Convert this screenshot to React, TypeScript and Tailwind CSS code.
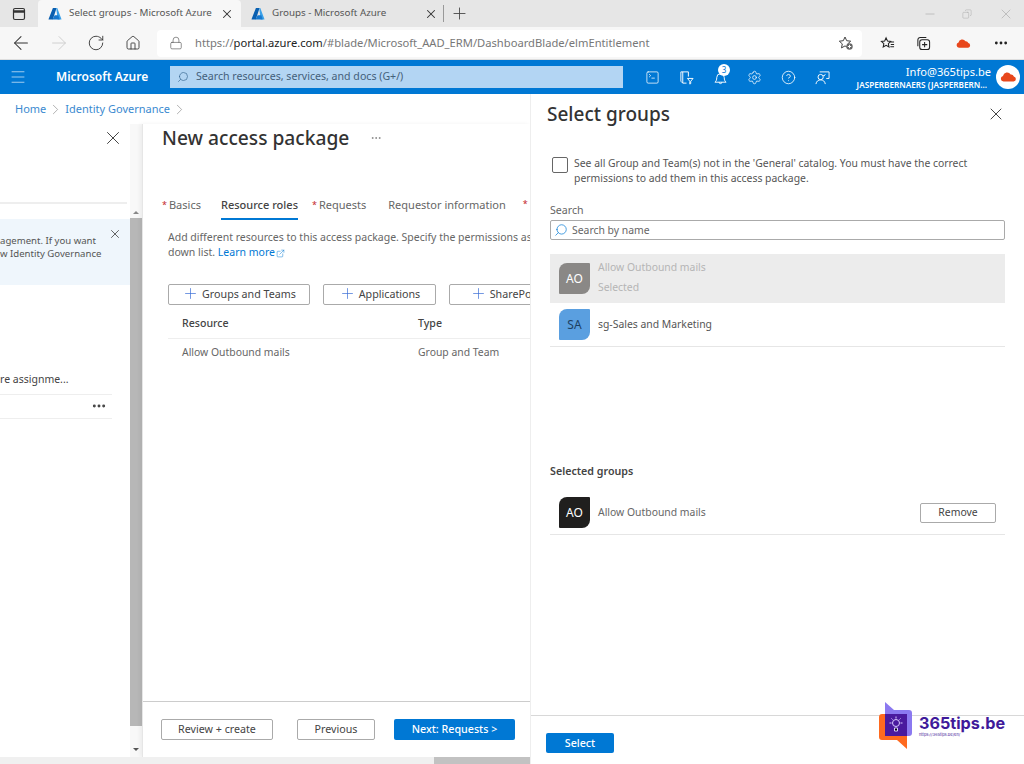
import {
  ArrowLeft,
  ArrowRight,
  ChevronRight,
  CircleHelp,
  Copy,
  Ellipsis,
  ExternalLink,
  Home,
  Lock,
  Menu,
  Minus,
  Plus,
  RotateCw,
  Search,
  Settings,
  SquareTerminal,
  X,
} from "lucide-react"

function AzureLogo() {
  return (
    <svg viewBox="0 0 16 16" className="w-[14px] h-[14px] shrink-0">
      <path d="M5.6 1.2h4.2L5.5 14.4H1.2a.5.5 0 0 1-.5-.7z" fill="#0a5fb0" />
      <path d="M9.4 1.2h1.2l4.7 12.5a.5.5 0 0 1-.5.7H11z" fill="#3aa0e8" />
      <path d="M7.6 9.5h4.2l1.6 4.9H5z" fill="#1678cf" />
    </svg>
  )
}

function TinyCloud({ className }: { className: string }) {
  return (
    <svg viewBox="0 0 20 12" className={className}>
      <path d="M4 11.5a3.4 3.4 0 0 1-.6-6.7A5 5 0 0 1 12.6 3a3.6 3.6 0 0 1 3.8 2.4 3.1 3.1 0 0 1-.2 6.1z" fill="#e8471c" />
    </svg>
  )
}

function BrowserChrome() {
  return (
    <>
      <div className="h-[27px] bg-[#e6e6e6] flex items-stretch shrink-0">
        <div className="w-[38px] flex items-center justify-center">
          <svg viewBox="0 0 14 14" className="w-[14px] h-[14px]" fill="none" stroke="#333" strokeWidth="1.2">
            <rect x="1.5" y="1.5" width="11" height="11" rx="1.5" />
            <path d="M1.5 4.5h11" strokeWidth="2.5" />
          </svg>
        </div>
        <div className="w-[203px] bg-[#f7f7f7] flex items-center pl-[10px] pr-[7px] text-[9.8px] text-[#555] rounded-t-[4px]">
          <AzureLogo />
          <span className="ml-[7px] whitespace-nowrap">Select groups - Microsoft Azure</span>
          <X className="ml-auto w-[14px] h-[14px] text-[#333]" strokeWidth={1.8} />
        </div>
        <div className="w-[202px] flex items-center pl-[10px] pr-[5px] text-[9.8px] text-[#555]">
          <AzureLogo />
          <span className="ml-[7px] whitespace-nowrap">Groups - Microsoft Azure</span>
          <X className="ml-auto w-[14px] h-[14px] text-[#333]" strokeWidth={1.8} />
        </div>
        <div className="w-px h-[17px] my-[5px] bg-[#999]" />
        <div className="ml-[6px] flex items-center">
          <Plus className="w-[19px] h-[19px] text-[#444]" strokeWidth={1.1} />
        </div>
        <div className="ml-auto flex items-center text-[#aaa]">
          <Minus className="w-[14px] h-[14px] mr-[25px]" strokeWidth={1.1} />
          <Copy className="w-[10px] h-[10px] mr-[26px] -scale-x-100" strokeWidth={1.2} />
          <X className="w-[16px] h-[16px] mr-[10px]" strokeWidth={1} />
        </div>
      </div>
      <div className="h-[33px] bg-[#f7f7f7] flex items-center shrink-0 border-b border-[#dedede]">
        <ArrowLeft className="ml-[10px] w-[22px] h-[22px] text-[#333]" strokeWidth={1.1} />
        <ArrowRight className="ml-[16px] w-[22px] h-[22px] text-[#ccc]" strokeWidth={1} />
        <RotateCw className="ml-[17px] w-[18px] h-[18px] text-[#333]" strokeWidth={1.2} />
        <Home className="ml-[20px] w-[16px] h-[16px] text-[#333]" strokeWidth={1.3} />
        <div className="ml-[16px] w-[705px] h-[27px] bg-white rounded-[4px] flex items-center pl-[12px] text-[11.2px] text-[#777]">
          <Lock className="w-[14px] h-[14px] text-[#555]" strokeWidth={1.1} />
          <span className="ml-[12px] whitespace-nowrap">
            https://<span className="text-[#222]">portal.azure.com</span>/#blade/Microsoft_AAD_ERM/DashboardBlade/elmEntitlement
          </span>
          <svg viewBox="0 0 16 16" className="ml-auto mr-[8px] w-[16px] h-[16px]" fill="none" stroke="#444" strokeWidth="1">
            <path d="M7 2l1.7 3.7 4 .5-3 2.7.8 4-3.5-2-3.5 2 .8-4-3-2.7 4-.5z" />
            <circle cx="11.5" cy="11.5" r="3.2" fill="#666" stroke="none" />
            <path d="M11.5 9.8v3.4M9.8 11.5h3.4" stroke="#fff" />
          </svg>
        </div>
        <svg viewBox="0 0 16 16" className="ml-[18px] w-[15px] h-[15px]" fill="none" stroke="#222" strokeWidth="1.1">
          <path d="M6.5 2l1.5 3.4 3.5.4-2.6 2.4.7 3.6-3.1-1.8-3.1 1.8.7-3.6L1.5 5.8 5 5.4z" />
          <path d="M11 6.5h4M11.5 9h3.5M11 11.5h4" />
        </svg>
        <svg viewBox="0 0 16 16" className="ml-[21px] w-[15px] h-[15px]" fill="none" stroke="#222" strokeWidth="1.1">
          <rect x="4" y="4" width="10.5" height="10.5" rx="2.5" />
          <path d="M2 11V4a2.5 2.5 0 0 1 2.5-2.5H11M9.2 6.5v5.5M6.5 9.2H12" />
        </svg>
        <TinyCloud className="ml-[25px] w-[15px] h-[9px]" />
        <Ellipsis className="ml-[22px] w-[16px] h-[16px] text-[#222]" strokeWidth={2.2} />
      </div>
    </>
  )
}

function PortalBar() {
  return (
    <div className="h-[34px] bg-[#0078d4] flex items-center shrink-0 text-white">
      <Menu className="ml-[9px] w-[18px] h-[18px] text-[#d5e8f7]" strokeWidth={1} />
      <span className="ml-[29px] w-[114px] text-[12px] font-semibold whitespace-nowrap">Microsoft Azure</span>
      <div className="w-[453px] h-[22px] bg-[#b3d5f3] flex items-center pl-[7px] text-[10.6px] text-[#44607a]">
        <Search className="w-[12px] h-[12px] -scale-x-100 text-[#3b6a94]" strokeWidth={1.4} />
        <span className="ml-[7px] whitespace-nowrap">Search resources, services, and docs (G+/)</span>
      </div>
      <SquareTerminal className="ml-[22px] w-[15px] h-[15px]" strokeWidth={1.2} />
      <svg viewBox="0 0 16 16" className="ml-[19px] w-[15px] h-[15px]" fill="none" stroke="#fff" strokeWidth="1">
        <path d="M2 2h8v5M2 2v10l2 2h4M4 2v12M9 9h6l-2.5 3v2.5l-1 .5v-3z" />
      </svg>
      <div className="ml-[19px] relative w-[15px] h-[15px]">
        <svg viewBox="0 0 16 16" className="w-[15px] h-[15px]" fill="none" stroke="#fff" strokeWidth="1">
          <path d="M2 13c1.5-1 2-2.5 2-5a4 4 0 0 1 8 0c0 2.5.5 4 2 5zM6.5 13a1.5 1.5 0 0 0 3 0" />
        </svg>
        <span className="absolute -top-[6px] left-[5px] w-[12px] h-[12px] rounded-full bg-white text-[#0078d4] text-[8px] leading-[12px] text-center">
          3
        </span>
      </div>
      <Settings className="ml-[19px] w-[15px] h-[15px]" strokeWidth={1.2} />
      <CircleHelp className="ml-[19px] w-[15px] h-[15px]" strokeWidth={1.3} />
      <svg viewBox="0 0 16 16" className="ml-[19px] w-[15px] h-[15px]" fill="none" stroke="#fff" strokeWidth="1">
        <circle cx="6" cy="7.5" r="2.8" />
        <path d="M1 15c.5-3 2.5-4.5 5-4.5s4.5 1.5 5 4.5M5 2h10v7h-3M11 4.5l-1.5 2-1-1" />
      </svg>
      <div className="ml-auto flex flex-col items-end mr-[5px]">
        <span className="text-[11.1px] leading-[15px] whitespace-nowrap">Info@365tips.be</span>
        <span className="text-[8.2px] leading-[11px] mr-[4px] font-semibold whitespace-nowrap">JASPERBERNAERS (JASPERBERN...</span>
      </div>
      <div className="w-[24px] h-[24px] rounded-full bg-white flex items-center justify-center mr-[4px]">
        <TinyCloud className="w-[17px] h-[10px]" />
      </div>
    </div>
  )
}

function LeftBlade() {
  return (
    <div className="w-[130px] shrink-0 flex flex-col overflow-hidden">
      <div className="h-[28px] flex items-center justify-end pr-[6px]">
        <X className="w-[22px] h-[22px] text-[#333]" strokeWidth={1} />
      </div>
      <div className="mt-[50px] mr-[3px] border-t-2 border-[#eee]" />
      <div className="mt-[15px] h-[66px] bg-[#eff6fc] flex justify-between pr-[8px] pt-[8px] text-[9.6px] leading-[12.5px] text-[#555]">
        <div className="whitespace-nowrap pt-[8px]">
          <div>agement. If you want</div>
          <div>w Identity Governance</div>
        </div>
        <X className="w-[14px] h-[14px] text-[#444]" strokeWidth={1.4} />
      </div>
      <div className="mt-[87px] text-[10.5px] text-[#444] whitespace-nowrap">re assignme...</div>
      <div className="mt-[6px] mr-[18px] border-t border-[#eee] h-[25px] border-b flex items-center justify-end pr-[5px]">
        <Ellipsis className="w-[16px] h-[16px] text-[#444]" strokeWidth={2.4} />
      </div>
    </div>
  )
}

function FakeScrollbar() {
  return (
    <div className="w-[12px] shrink-0 flex flex-col items-center bg-[#f8f8f8]">
      <div className="mt-[82px] h-[12px] flex items-center">
        <div className="w-0 h-0 border-x-[3px] border-x-transparent border-b-[3px] border-b-[#888]" />
      </div>
      <div className="w-full h-[508px] bg-[#b7b7b7]" />
      <div className="mt-[17px] h-[12px] flex items-center">
        <div className="w-0 h-0 border-x-[3px] border-x-transparent border-t-[3px] border-t-[#555]" />
      </div>
    </div>
  )
}

function Tab({ label, required, active }: { label: string; required?: boolean; active?: boolean }) {
  return (
    <div
      className={`h-[28px] flex items-center whitespace-nowrap border-b-2 text-[11px] ${
        active ? "border-[#0078d4] text-[#444] font-medium" : "border-transparent text-[#666]"
      }`}
    >
      {required && <span className="text-[#c4262e] text-[9px] mr-[2px]">*</span>}
      {label}
    </div>
  )
}

function AddButton({ label, className }: { label: string; className: string }) {
  return (
    <div className={`h-[21px] border border-[#aaa] rounded-[2px] flex items-center justify-center gap-[3px] text-[10.7px] text-[#444] whitespace-nowrap shrink-0 ${className}`}>
      <Plus className="w-[17px] h-[17px] text-[#3b6fd6] -mt-[2px]" strokeWidth={1} />
      {label}
    </div>
  )
}

function MainBlade() {
  return (
    <div className="flex-1 min-w-0 flex flex-col overflow-hidden border-l border-[#e6e6e6] shadow-[-2px_0_4px_rgba(0,0,0,0.05)]">
      <div className="flex items-center pl-[19px] h-[28px]">
        <h1 className="text-[19.2px] font-medium text-[#333] whitespace-nowrap">New access package</h1>
        <Ellipsis className="ml-[21px] w-[12px] h-[12px] text-[#777]" strokeWidth={1.5} />
      </div>
      <div className="mt-[40px] ml-[19px] flex">
        <Tab label="Basics" required />
        <div className="ml-[20px]"><Tab label="Resource roles" active /></div>
        <div className="ml-[14px]"><Tab label="Requests" required /></div>
        <div className="ml-[22px]"><Tab label="Requestor information" /></div>
        <div className="ml-[17px] text-[#c4262e] text-[9px] pt-[5px]">*</div>
      </div>
      <div className="mt-[10px] ml-[25px] text-[10.5px] leading-[15px] text-[#666] whitespace-nowrap">
        <div>Add different resources to this access package. Specify the permissions assigned to users in the</div>
        <div>
          down list. <span className="text-[#0078d4]">Learn more</span>
          <ExternalLink className="inline ml-[1px] w-[9px] h-[9px] text-[#0078d4]" strokeWidth={1.3} />
        </div>
      </div>
      <div className="mt-[24px] ml-[25px] flex gap-[13px]">
        <AddButton label="Groups and Teams" className="w-[142px]" />
        <AddButton label="Applications" className="w-[113px]" />
        <AddButton label="SharePoint sites" className="w-[142px]" />
      </div>
      <div className="mt-[7px] ml-[25px] h-[27px] pb-[2px] flex items-center border-b border-[#eee] text-[10.6px] font-medium text-[#444] pl-[14px]">
        <div className="w-[236px]">Resource</div>
        <div>Type</div>
      </div>
      <div className="ml-[25px] h-[26px] pt-[2px] flex items-center text-[10.4px] text-[#666] pl-[14px] whitespace-nowrap">
        <div className="w-[236px]">Allow Outbound mails</div>
        <div>Group and Team</div>
      </div>
      <div className="mt-auto h-[56px] border-t border-[#ccc] flex items-start pt-[17px] pl-[18px] text-[10.7px]">
        <div className="w-[112px] h-[21px] border border-[#aaa] rounded-[2px] flex items-center justify-center text-[#444]">Review + create</div>
        <div className="ml-[24px] w-[78px] h-[21px] border border-[#aaa] rounded-[2px] flex items-center justify-center text-[#444]">Previous</div>
        <div className="ml-[19px] w-[121px] h-[21px] bg-[#0078d4] rounded-[2px] flex items-center justify-center text-white font-medium">Next: Requests &gt;</div>
      </div>
    </div>
  )
}

function GroupAvatar({ initials, className }: { initials: string; className: string }) {
  return (
    <div className={`w-[31px] h-[31px] shrink-0 rounded-tl-[8px] rounded-br-[8px] rounded-tr-[1px] rounded-bl-[1px] flex items-center justify-center text-[12px] ${className}`}>
      {initials}
    </div>
  )
}

function SelectPanel() {
  return (
    <div className="w-[494px] shrink-0 border-l border-[#eee] bg-white flex flex-col">
      <div className="flex items-center justify-between pl-[16px] pr-[18px] mt-[6px] h-[28px]">
        <h2 className="text-[19px] font-medium text-[#333]">Select groups</h2>
        <X className="w-[20px] h-[20px] text-[#333]" strokeWidth={1.1} />
      </div>
      <div className="mt-[28px] ml-[21px] flex">
        <div className="w-[16px] h-[16px] mt-[1px] border border-[#666] rounded-[2px] shrink-0" />
        <p className="ml-[6px] text-[10.4px] leading-[15px] text-[#555] w-[420px]">
          See all Group and Team(s) not in the 'General' catalog. You must have the correct permissions to add them in this access package.
        </p>
      </div>
      <div className="mt-[17px] ml-[19px] text-[10.6px] leading-[14px] text-[#666]">Search</div>
      <div className="mt-[3px] ml-[19px] w-[455px] h-[20px] border border-[#aaa] rounded-[2px] flex items-center pl-[3px] text-[10.4px] leading-[14px] text-[#666]">
        <Search className="w-[14px] h-[14px] -scale-x-100 text-[#0078d4]" strokeWidth={1.2} />
        <span className="ml-[4px]">Search by name</span>
      </div>
      <div className="mt-[14px] ml-[19px] w-[455px]">
        <div className="h-[49px] bg-[#ececec] flex items-center pl-[9px] text-[10.4px] leading-[20px] text-[#b5b5b5]">
          <GroupAvatar initials="AO" className="bg-[#8a8886] text-white" />
          <div className="ml-[8px] -mt-[3px]">
            <div>Allow Outbound mails</div>
            <div>Selected</div>
          </div>
        </div>
        <div className="h-[44px] border-b border-[#e6e6e6] flex items-center pl-[9px] text-[10.4px] text-[#555]">
          <GroupAvatar initials="SA" className="bg-[#5a9fe0] text-[#1c3f63]" />
          <span className="ml-[8px]">sg-Sales and Marketing</span>
        </div>
      </div>
      <div className="mt-[117px] ml-[19px] text-[10.7px] leading-[14px] font-semibold text-[#444]">Selected groups</div>
      <div className="mt-[18px] ml-[19px] w-[455px] h-[39px] pb-[5px] border-b border-[#e6e6e6] flex items-center pl-[9px] text-[10.4px] text-[#666]">
        <GroupAvatar initials="AO" className="bg-[#201f1e] text-white" />
        <span className="ml-[8px]">Allow Outbound mails</span>
        <div className="ml-auto mr-[9px] w-[76px] h-[20px] border border-[#aaa] rounded-[2px] flex items-center justify-center text-[#444]">Remove</div>
      </div>
      <div className="mt-auto h-[49px] border-t border-[#d8d8d8] pl-[15px] pt-[17px]">
        <div className="w-[68px] h-[20px] bg-[#0078d4] rounded-[2px] flex items-center justify-center text-[10.7px] font-medium text-white">Select</div>
      </div>
    </div>
  )
}

function Watermark() {
  return (
    <div className="absolute left-[879px] top-[702px] flex items-center">
      <svg viewBox="0 0 33 47" className="w-[33px] h-[47px]">
        <path d="M0 15a3 3 0 0 1 3-3h25v35l-10-9H3a3 3 0 0 1-3-3z" fill="#ff6a1f" />
        <path d="M6 0l9 8h15a3 3 0 0 1 3 3v20a3 3 0 0 1-3 3H6z" fill="#8b79f0" />
        <rect x="6" y="12" width="22" height="22" fill="#4a1a9e" />
        <circle cx="17" cy="21" r="3.5" fill="none" stroke="#d9ccff" strokeWidth="1" />
        <path d="M15.5 26h3v3h-3zM17 14.5v2M10.5 21h2M21.5 21h2M12.5 16.5l1 1M21.5 16.5l-1 1" stroke="#d9ccff" strokeWidth="1" />
      </svg>
      <div className="ml-[7px] flex flex-col">
        <span className="font-['Inter',sans-serif] text-[16.2px] leading-[19px] font-bold text-[#3f1a9a] whitespace-nowrap">365tips.be</span>
        <span className="font-['Inter',sans-serif] text-[4px] leading-[4px] text-[#3f1a9a]">https://365tips.be/en/</span>
      </div>
    </div>
  )
}

export default function App() {
  return (
    <div className="relative w-[1024px] h-[764px] overflow-hidden bg-white flex flex-col font-['Noto_Sans',sans-serif]">
      <BrowserChrome />
      <PortalBar />
      <div className="flex-1 min-h-0 flex">
        <div className="w-[530px] shrink-0 flex flex-col min-w-0">
          <div className="h-[30px] flex items-center pl-[15px] text-[11px] text-[#3b8ad0]">
            Home
            <ChevronRight className="mx-[1px] w-[17px] h-[17px] text-[#888]" strokeWidth={0.9} />
            Identity Governance
            <ChevronRight className="ml-[1px] w-[17px] h-[17px] text-[#888]" strokeWidth={0.9} />
          </div>
          <div className="flex-1 min-h-0 flex">
            <LeftBlade />
            <FakeScrollbar />
            <MainBlade />
          </div>
          <div className="h-[7px] shrink-0 bg-[#f0f0f0] flex justify-end">
            <div className="w-[96px] bg-[#c2c2c2]" />
          </div>
        </div>
        <SelectPanel />
      </div>
      <Watermark />
    </div>
  )
}
